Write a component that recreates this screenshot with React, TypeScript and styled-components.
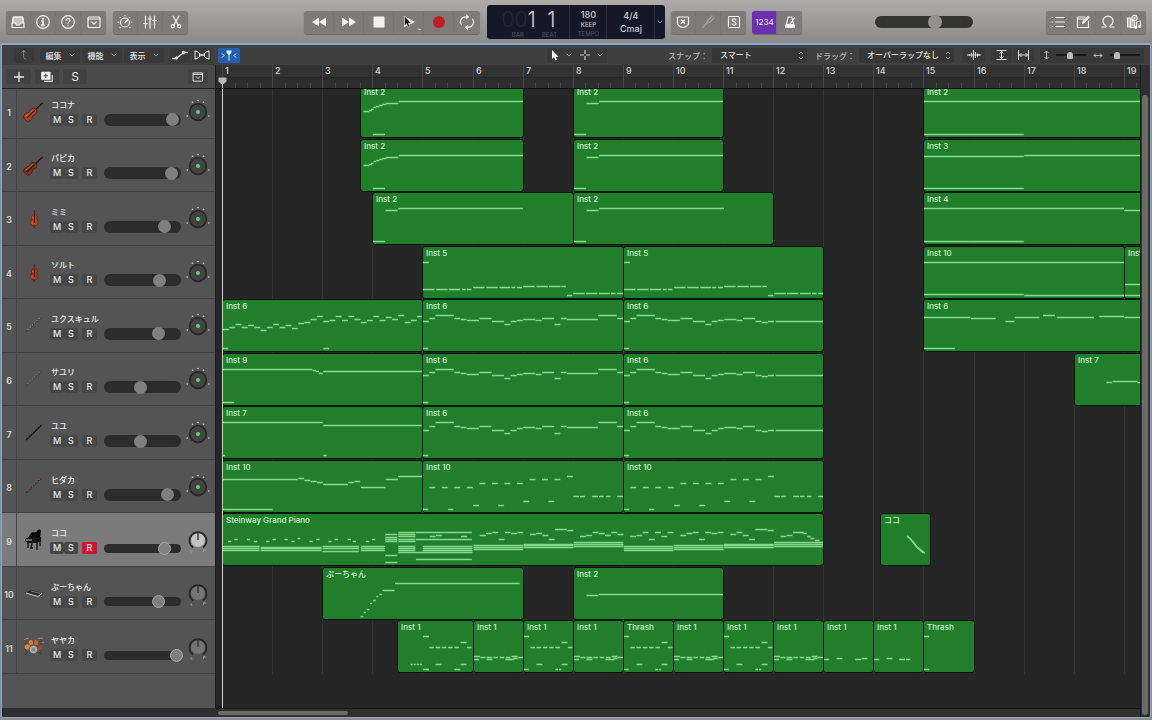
import React from 'react';
import styled, { createGlobalStyle, css } from 'styled-components';

const GlobalStyle = createGlobalStyle`
  *, *::before, *::after { box-sizing: border-box; }
  html, body, #root { height: 100%; }
  body {
    margin: 0;
    background: #8f8d8c;
    font-family: Inter, "Noto Sans CJK JP", sans-serif;
    color: #e4e4e4;
    overflow: hidden;
  }
  button, select { font: inherit; color: inherit; border: 0; padding: 0; margin: 0; background: none; }
  svg { display: block; }
`;

/* ---------- timeline data ---------- */

const BAR = 50.1;
const EIGHTH = BAR / 8;
const barX = (bar: number) => Math.round((bar - 1) * BAR);

/* start and length in eighth notes, then height inside the region */
type Note = [number, number, number];
type RegionData = { name: string; from: number; to: number; notes: Note[]; curve?: string };

const run = (start: number, ys: number[]): Note[] => ys.map((y, i) => [start + i, 1, y]);
const at = (y: number, len: number, ...starts: number[]): Note[] => starts.map((s) => [s, len, y]);
const chord = (start: number, len: number, ...ys: number[]): Note[] => ys.map((y) => [start, len, y]);

const swell: Note[] = [
  [0.4, 0.6, 25], [0.9, 0.5, 25], [1.3, 0.5, 24], [1.6, 0.5, 23], [2, 0.5, 21], [2.4, 0.6, 20],
  [2.9, 0.6, 19], [3.4, 0.7, 18], [4, 2, 17], [6, 20, 15], [1.9, 2, 48],
];
const held: Note[] = [[0, 2, 48], [2, 2, 17], [4, 20, 15]];
const pulse: Note[] = [
  [0, 1, 15],
  [0, 1.9, 42], [2.1, 1.9, 42], [4.1, 1.9, 42], [6.2, 0.7, 42], [7, 0.8, 42],
  [8, 1.9, 40], [10.1, 1.9, 40], [12.2, 1.8, 40], [14.1, 0.7, 40], [15, 0.9, 40],
  [16, 1.9, 39], [18.1, 1.9, 39], [20.1, 1.9, 39], [22.1, 0.8, 39],
  [23, 0.9, 48], [24, 1.9, 46], [26, 1.9, 46], [28.1, 1.8, 46], [30, 0.8, 46], [31, 1, 46],
];
const phrase: Note[] = [
  [0, 0.9, 48], [0, 1, 21], [1, 1, 18], [2, 3, 15], [5, 1, 18], [6, 1, 19], [7, 2, 20], [9, 2, 18],
  [11, 2, 21], [13, 1, 24], [14, 1, 21], [15, 1, 20], [16, 2, 19], [18, 1, 20], [19, 2, 18],
];
const phraseOpen: Note[] = [...phrase, [21, 1, 24], [22, 1, 18], [23, 5, 19], [28, 3, 15], [31, 1, 18]];
const phraseClosed: Note[] = [...phrase, [21, 1, 21], [22, 1, 22], [23, 1, 21], [24.2, 7.8, 21]];
const widen = (notes: Note[]): Note[] =>
  notes.map(([s, l, y]) => [s, l, y > 40 ? y : Math.round(15 + (y - 15) * 1.25)]);
const broken: Note[] = [
  ...at(26, 1, 1, 3, 5, 7), ...at(22, 1, 9, 11, 13, 15), ...at(18, 1, 17, 19, 21), [23, 1, 15],
  ...at(48, 0.9, 0, 4), ...at(44, 1, 8, 12), ...at(40, 1, 16, 20),
  [24, 1, 35], [25.1, 0.8, 35], [27, 1, 35], [28.1, 0.8, 35], [29.2, 0.8, 35], [31, 1, 35],
];
const piano: Note[] = [
  ...at(27, 0.6, 0.8, 4.9, 6.9, 10.9, 13.8, 16.8, 20.7, 22.8),
  ...at(25, 0.6, 1.8, 3.8, 7.9, 9.8, 14.9, 17.8, 19.9, 23.8), [11.9, 0.5, 24],
  ...chord(0, 5.9, 32, 34, 36), ...chord(6, 9.8, 33, 34, 36), ...chord(15.9, 5.9, 32, 34, 37),
  ...chord(22, 3.9, 32, 34, 36),
  ...chord(25.9, 2, 20, 23, 25, 27, 41, 48), ...chord(28, 2.8, 18, 20, 22, 25, 27, 32, 34, 36),
  ...chord(30.8, 9, 18, 25, 45), ...chord(31.9, 8, 32, 34, 36), [28, 11.9, 38],
  [33, 1, 22], [34, 1, 21], [38, 1, 22],
  ...chord(40, 8, 31, 33, 35), ...chord(48, 8, 30, 31, 33), ...chord(56, 8, 28, 30, 32),
  ...run(41, [21, 19, 18, 25, 18, 19, 18]), ...run(49, [20, 19, 21, 25]), [53, 2, 15], [55, 1, 16],
  ...run(57, [22, 21, 18, 19, 21, 18, 20]),
  ...chord(64, 8, 32, 34, 36), ...chord(72, 8, 31, 33, 35), ...chord(80, 8, 30, 31, 33),
  ...chord(88, 8, 28, 30, 32),
  ...run(65, [22, 21, 18, 25, 18, 22, 18]), ...run(73, [21, 19, 18, 25, 18, 19, 18]),
  ...run(81, [20, 18, 21, 25]), [85, 2, 15], [87, 1, 16], [89, 1, 22], [90, 1, 21], [91, 1.8, 18],
  [92.7, 0.6, 19], [93.3, 0.6, 22], [93.8, 0.7, 24], [94.5, 0.8, 26],
];
const drumIntro: Note[] = [
  [4, 1, 15], ...at(26, 0.8, 5, 6, 7, 8, 9, 11), [10, 1, 21], ...at(43, 0.4, 2, 2.5, 3, 3.5),
  [4, 1, 48], [6, 1, 43], [9, 1, 48], [10, 1, 43],
];
const drumFill: Note[] = [
  [0, 0.9, 15], ...at(26, 0.8, 1, 2, 3, 4, 5, 7), [6, 1, 21], [0, 0.8, 48], [2, 1, 43],
  [5, 0.5, 48], [5.6, 0.4, 48], [6, 1, 43],
];
const drumBeat: Note[] = [
  [0, 1, 35], [0, 0.9, 38], [1, 0.9, 36], [2, 1, 36], [2, 1, 38], [3.1, 0.8, 36], [4.1, 0.8, 36],
  [5.1, 0.8, 36], [5, 1.5, 38], [6, 1, 35], [6.3, 0.7, 37], [7, 1, 36],
];

type TrackData = {
  name: string;
  icon: React.ReactNode;
  volume: number;
  stereo?: boolean;
  armed?: boolean;
  regions: RegionData[];
};

const Violin = ({ hue }: { hue: string }) => (
  <svg width="22" height="22" viewBox="0 0 22 22">
    <g transform="translate(7.500 14.500) rotate(46)">
      <path d="M0-17V-3" stroke="#2a1714" strokeWidth="1.500" />
      <path
        d="M-2.600-6.400C-1.200-7.600 1.200-7.600 2.600-6.400 4-5 3.400-3 2.600-2 2.200-.9 2.600 0 3.600 1.400 4.800 4 4 6.600 2 7.200H-2C-4 6.600-4.800 4-3.600 1.400-2.600 0-2.200-.9-2.600-2-3.400-3-4-5-2.600-6.400Z"
        fill={hue}
        stroke="#40160e"
        strokeWidth=".7"
      />
      <path d="M0-6V5" stroke="#2b1512" strokeWidth="1.200" />
      <path d="M-1.600-4.500C-2-2-1.600 2-2.200 4.600" stroke="#f08a5a" strokeWidth=".6" fill="none" />
    </g>
  </svg>
);

const Cello = ({ hue }: { hue: string }) => (
  <svg width="22" height="22" viewBox="0 0 22 22">
    <path d="M11.500 3v7M11 17v4" stroke="#54261a" strokeWidth="1.200" />
    <path
      d="M9 8.500c1.200-1.200 3.800-1.200 5 0 1 1.200.4 2.400-.2 3.200.2 1 .8 1.600 1.200 2.800.4 2-.6 4-2 4.300h-3c-1.600-.3-2.600-2.300-2.200-4.300.4-1.200 1-1.800 1.200-2.800-.6-.8-1-2 0-3.200Z"
      fill={hue}
      stroke="#571f12"
      strokeWidth=".6"
    />
    <path d="M11.400 8v8" stroke="#35150e" strokeWidth="1" />
    <path d="M9.800 9.500v2M9.200 14.500v2.500" stroke="#ee8358" strokeWidth=".7" />
  </svg>
);

const Woodwind = ({ tone, shine }: { tone: string; shine: string }) => (
  <svg width="22" height="22" viewBox="0 0 22 22">
    <path d="M3 18 18.500 3" stroke={tone} strokeWidth="1.500" />
    <path d="M4.500 16 18 2.600" stroke={shine} strokeWidth=".8" strokeDasharray="1.600 1.500" />
  </svg>
);

const GrandPiano = () => (
  <svg width="22" height="22" viewBox="0 0 22 22">
    <path d="M5 9 8 4C9 2 12 5 14 2c1-2 4-2 4 0l-1 7Z" fill="#0b0b0b" />
    <path d="M2 10 6 8h12v4l-4 2H5l-3-2Z" fill="#141414" />
    <path d="M3 11h6" stroke="#bdbdbd" strokeWidth="1" />
    <path d="M5 13v6M14 13v8M17 12v5M9 14l-1 5h2" stroke="#0e0e0e" strokeWidth="1.300" fill="none" />
  </svg>
);

const Keyboard = () => (
  <svg width="22" height="22" viewBox="0 0 22 22">
    <path d="m2 11 6-3 12 3-5 4Z" fill="#2a2a2a" />
    <path d="m3 11 12 3.500 4-3" stroke="#d6d6d6" strokeWidth="1" fill="none" />
    <path d="m8 9 9 2.500" stroke="#8c8c8c" strokeWidth=".8" />
  </svg>
);

const Drums = () => (
  <svg width="22" height="22" viewBox="0 0 22 22">
    <path d="M1 3.500 6 2M15 2.500l5-.5M17 7l4-1" stroke="#a58a5c" strokeWidth="1" />
    <path d="M3 4v13M18 3v14M2 19l3-3M19 19l-3-3" stroke="#3a3a3a" strokeWidth=".9" />
    <rect x="6" y="4" width="4" height="5" rx="1.500" fill="#d9783c" />
    <rect x="11" y="4" width="4" height="5" rx="1.500" fill="#c86429" />
    <circle cx="4.500" cy="11" r="2.700" fill="#e0803f" />
    <rect x="15" y="9" width="4" height="5" rx="1.500" fill="#9c4c22" />
    <circle cx="10.500" cy="13.500" r="4.300" fill="#a9a9a9" stroke="#4d4d4d" strokeWidth=".8" />
    <circle cx="10.500" cy="13.500" r="1.600" fill="#7c8288" />
  </svg>
);

const tracks: TrackData[] = [
  {
    name: 'ココナ', icon: <Violin hue="#b5401f" />, volume: 94,
    regions: [
      { name: 'Inst 2', from: 3.75, to: 7, notes: swell },
      { name: 'Inst 2', from: 8, to: 11, notes: held },
      { name: 'Inst 2', from: 15, to: 20, notes: [[0, 40, 15], [0, 16, 48]] },
    ],
  },
  {
    name: 'パピカ', icon: <Violin hue="#7a3420" />, volume: 92,
    regions: [
      { name: 'Inst 2', from: 3.75, to: 7, notes: swell },
      { name: 'Inst 2', from: 8, to: 11, notes: held },
      { name: 'Inst 3', from: 15, to: 20, notes: [[0, 16, 16], [16, 24, 15], [0, 16, 48]] },
    ],
  },
  {
    name: 'ミミ', icon: <Cello hue="#b8431f" />, volume: 82,
    regions: [
      { name: 'Inst 2', from: 4, to: 8, notes: held },
      { name: 'Inst 2', from: 8, to: 12, notes: held },
      { name: 'Inst 4', from: 15, to: 20, notes: [[0, 32, 15], [32, 8, 17], [0, 16, 48]] },
    ],
  },
  {
    name: 'ソルト', icon: <Cello hue="#a33a1f" />, volume: 74,
    regions: [
      { name: 'Inst 5', from: 5, to: 9, notes: pulse },
      { name: 'Inst 5', from: 9, to: 13, notes: pulse },
      { name: 'Inst 10', from: 15, to: 19, notes: [[0, 32, 15], [0, 16, 47], [16, 16, 48]] },
      { name: 'Inst 10', from: 19, to: 23, notes: [[0, 8, 37], [0, 8, 48]] },
    ],
  },
  {
    name: 'ユクスキュル', icon: <Woodwind tone="#444444" shine="#b4b4b4" />, volume: 73,
    regions: [
      {
        name: 'Inst 6', from: 1, to: 5,
        notes: [
          ...run(0, [29, 27, 24, 27, 25, 27, 30, 27, 24, 27, 25, 28, 23, 22, 19, 16]),
          ...run(16, [21, 20, 16, 20, 16, 19, 22, 20, 16, 20, 17, 19, 15, 22, 20, 16]),
          [0, 0.9, 48], [16, 1, 48],
        ],
      },
      { name: 'Inst 6', from: 5, to: 9, notes: phraseOpen },
      { name: 'Inst 6', from: 9, to: 13, notes: phraseClosed },
      {
        name: 'Inst 6', from: 15, to: 20,
        notes: [[0, 7.5, 17], [7.5, 4, 18], [13, 1.5, 21], [14.5, 4, 17], [19, 2, 15], [21.2, 6, 17], [28, 4, 16], [32, 8, 17], [0, 5, 48]],
      },
    ],
  },
  {
    name: 'サユリ', icon: <Woodwind tone="#4a4a4a" shine="#8d8d8d" />, volume: 46,
    regions: [
      {
        name: 'Inst 9', from: 1, to: 5,
        notes: [[0, 14.3, 15], [14.3, 0.6, 16], [14.8, 0.6, 17], [15.3, 0.7, 19], [16, 16, 17], [0, 1.8, 48]],
      },
      { name: 'Inst 6', from: 5, to: 9, notes: phraseOpen },
      { name: 'Inst 6', from: 9, to: 13, notes: phraseClosed },
      { name: 'Inst 7', from: 18, to: 22, notes: [[5, 1, 28], [6, 4, 27], [10, 4, 28]] },
    ],
  },
  {
    name: 'ユユ', icon: <Woodwind tone="#0c0c0c" shine="#5a5a5a" />, volume: 46,
    regions: [
      { name: 'Inst 7', from: 1, to: 5, notes: [[0, 16, 15], [16, 16, 18], [0, 0.4, 48], [16, 0.6, 48]] },
      { name: 'Inst 6', from: 5, to: 9, notes: widen(phraseOpen) },
      { name: 'Inst 6', from: 9, to: 13, notes: widen(phraseClosed) },
    ],
  },
  {
    name: 'ヒダカ', icon: <Woodwind tone="#4c2c2c" shine="#9a7f7f" />, volume: 87,
    regions: [
      {
        name: 'Inst 10', from: 1, to: 5,
        notes: [
          [0, 12, 18], [12, 1, 17], [13, 1, 19], [14, 1, 20], [15, 1, 21], [16, 4, 23], [20, 1, 21],
          [21, 1, 20], [22, 4, 26], [26, 2, 18], [28, 4, 15], [0, 8, 48],
        ],
      },
      { name: 'Inst 10', from: 5, to: 9, notes: broken },
      { name: 'Inst 10', from: 9, to: 13, notes: broken },
    ],
  },
  {
    name: 'ココ', icon: <GrandPiano />, volume: 82, stereo: true, armed: true,
    regions: [
      { name: 'Steinway Grand Piano', from: 1, to: 13, notes: piano },
      { name: 'ココ', from: 14.125, to: 15.125, notes: [], curve: 'M26 22c5 3 7 8 10 11s5 5 8 6' },
    ],
  },
  {
    name: 'ぷーちゃん', icon: <Keyboard />, volume: 73, stereo: true,
    regions: [
      {
        name: 'ぷーちゃん', from: 3, to: 7,
        notes: [
          [6, 0.5, 48], [6.5, 0.4, 44], [7, 0.5, 41], [7.5, 0.4, 35], [8, 0.5, 32], [8.5, 0.4, 28],
          [9, 0.5, 26], [9.5, 2, 22], [11.5, 20, 15],
        ],
      },
      { name: 'Inst 2', from: 8, to: 11, notes: [[2, 2, 27], [4, 20, 26]] },
    ],
  },
  {
    name: 'ヤヤカ', icon: <Drums />, volume: 100, stereo: true,
    regions: [
      { name: 'Inst 1', from: 4.5, to: 6, notes: drumIntro },
      { name: 'Inst 1', from: 6, to: 7, notes: drumBeat },
      { name: 'Inst 1', from: 7, to: 8, notes: drumFill },
      { name: 'Inst 1', from: 8, to: 9, notes: drumBeat },
      { name: 'Thrash', from: 9, to: 10, notes: drumFill },
      { name: 'Inst 1', from: 10, to: 11, notes: drumBeat },
      { name: 'Inst 1', from: 11, to: 12, notes: drumFill },
      { name: 'Inst 1', from: 12, to: 13, notes: drumBeat },
      { name: 'Inst 1', from: 13, to: 14, notes: [[0, 0.9, 38], [2, 1, 37], [5, 1, 38], [6, 1, 37]] },
      { name: 'Inst 1', from: 14, to: 15, notes: [[0, 0.9, 38], [2, 1, 37], [4, 1, 38], [5.1, 0.8, 38]] },
      { name: 'Thrash', from: 15, to: 16, notes: [[0, 0.9, 15], [0, 0.9, 48]] },
    ],
  },
];

/* ---------- frame ---------- */

const Shell = styled.div`
  display: flex;
  flex-direction: column;
  height: 100%;
`;

const ControlBar = styled.header`
  display: flex;
  align-items: center;
  height: 43px;
  flex: none;
  padding: 1px 6px 0;
  background: linear-gradient(#aeacab, #8c8a89);
`;

const Spacer = styled.div<{ $grow: number }>`
  flex: ${(p) => p.$grow} 1 0;
`;

const Cluster = styled.div<{ $gap: number }>`
  display: flex;
  align-items: center;
  gap: ${(p) => p.$gap}px;
`;

const ButtonGroup = styled.div`
  display: flex;
  height: 23px;
  border-radius: 3px;
  overflow: hidden;
  background: #7d7c7b;
  box-shadow: 0 1px 1px #6a6968;
`;

const BarButton = styled.button<{ $wide?: boolean; $purple?: boolean }>`
  width: ${(p) => (p.$wide ? 30 : 25)}px;
  display: flex;
  align-items: center;
  justify-content: center;
  color: #f1f1f1;
  font-size: 8px;
  font-weight: 500;
  border-right: 1px solid #777675;
  &:last-child {
    border-right: 0;
    width: ${(p) => (p.$wide ? 26 : 25)}px;
  }
  ${(p) => p.$purple && css`background: #6b2fb0; color: #e9d9ff;`}
`;

const Lcd = styled.section`
  display: flex;
  height: 34px;
  width: 178px;
  border-radius: 3px;
  background: #161827;
  color: #cdd0dc;
`;

const LcdCell = styled.div<{ $width: number; $top?: number; $gap?: number }>`
  display: flex;
  flex-direction: column;
  align-items: center;
  justify-content: ${(p) => (p.$top === undefined ? 'center' : 'flex-start')};
  gap: ${(p) => p.$gap ?? 0}px;
  width: ${(p) => p.$width}px;
  padding-top: ${(p) => p.$top ?? 0}px;
  border-right: 1px solid #2a2c3a;
  font-size: 9px;
  line-height: 10px;
  font-weight: 500;
  &:last-child { border-right: 0; }
`;

const Position = styled.div`
  display: grid;
  grid-template-columns: 34px 10px;
  column-gap: 10px;
  text-align: right;
  font-size: 21px;
  line-height: 22px;
  font-weight: 300;
`;

const Ghost = styled.span`
  color: #262838;
`;

const Caption = styled.small<{ $bright?: boolean }>`
  font-size: 6px;
  line-height: 8px;
  font-weight: 500;
  color: ${(p) => (p.$bright ? '#c3c6d2' : '#4b4d5b')};
`;

const Captions = styled.div`
  display: flex;
  gap: 18px;
  padding-left: 12px;
`;

const MasterVolume = styled.input`
  appearance: none;
  width: 98px;
  height: 12px;
  margin: 0;
  border-radius: 6px;
  background: #343432;
  &::-webkit-slider-thumb {
    appearance: none;
    width: 14px;
    height: 14px;
    border-radius: 50%;
    background: #939291;
  }
`;

const Window = styled.main`
  display: flex;
  flex-direction: column;
  flex: 1;
  min-height: 0;
  margin: 0 1px 2px;
  border: 1px solid #86a8dc;
  border-top-width: 2px;
  border-radius: 3px;
  background: #262626;
  overflow: hidden;
`;

const MenuBar = styled.nav`
  display: flex;
  align-items: center;
  height: 20px;
  flex: none;
  padding: 0 6px 0 12px;
  background: #404040;
  font-size: 8px;
  font-weight: 500;
`;

const MenuButton = styled.button<{ $width: number; $active?: boolean }>`
  display: flex;
  align-items: center;
  justify-content: center;
  gap: 7px;
  width: ${(p) => p.$width}px;
  height: 15px;
  border-radius: 2px;
  background: ${(p) => (p.$active ? '#245fae' : '#393939')};
  color: #e2e2e2;
`;

const SelectField = styled.label<{ $width: number }>`
  display: flex;
  align-items: center;
  gap: 4px;
  position: relative;
  color: #bdbdbd;
  white-space: nowrap;
  select {
    appearance: none;
    width: ${(p) => p.$width}px;
    height: 15px;
    padding-left: 8px;
    border-radius: 2px;
    background: #363636;
    color: #e2e2e2;
  }
  svg { position: absolute; right: 3px; top: 3px; pointer-events: none; }
`;

const ZoomGroup = styled.div`
  display: flex;
  align-items: center;
  justify-content: space-around;
  width: 104px;
  height: 15px;
  background: #383838;
`;

const ZoomSlider = styled.input`
  appearance: none;
  width: 30px;
  height: 2px;
  margin: 0;
  background: #161616;
  &::-webkit-slider-thumb {
    appearance: none;
    width: 6px;
    height: 7px;
    border-radius: 3px 3px 1px 1px;
    background: #b9b9b9;
  }
`;

/* ---------- workspace ---------- */

const Workspace = styled.div`
  display: grid;
  grid-template-columns: 214px minmax(0, 1fr) 10px;
  grid-template-rows: 24px minmax(0, 1fr) 9px;
  flex: 1;
  min-height: 0;
`;

const PanelHead = styled.div`
  display: flex;
  align-items: center;
  gap: 4px;
  padding: 0 7px 0 4px;
  background: #4a4a4a;
  border-right: 1px solid #1b1b1b;
  border-bottom: 1px solid #1d1d1d;
`;

const HeadButton = styled.button<{ $width: number }>`
  display: flex;
  align-items: center;
  justify-content: center;
  width: ${(p) => p.$width}px;
  height: 15px;
  border-radius: 2px;
  background: #424242;
  color: #eeeeee;
  font-size: 12px;
  line-height: 15px;
`;

const Clip = styled.div`
  overflow: hidden;
  background: #545454;
  border-right: 1px solid #1b1b1b;
`;

const rows = css`
  display: grid;
  grid-template-rows: repeat(${tracks.length}, minmax(0, 1fr));
  height: 589px;
  margin: -4px 0 0;
  padding: 0;
  list-style: none;
`;

const TrackList = styled.ol`
  ${rows}
`;

const TrackRow = styled.li<{ $selected?: boolean }>`
  display: flex;
  align-items: center;
  background: ${(p) => (p.$selected ? '#7b7b7b' : '#545454')};
  border-bottom: 1px solid #414141;
`;

const TrackNumber = styled.span`
  display: flex;
  align-items: center;
  justify-content: center;
  align-self: stretch;
  width: 15px;
  border-right: 1px solid #444444;
  padding-top: 3px;
  font-size: 9px;
  font-weight: 500;
`;

const IconCell = styled.span`
  display: flex;
  justify-content: center;
  width: 33px;
`;

const TrackMain = styled.div`
  display: flex;
  flex-direction: column;
  gap: 3px;
  width: 131px;
  padding-top: 3px;
`;

const TrackName = styled.strong`
  padding-left: 1px;
  font-size: 8px;
  line-height: 11px;
  font-weight: 500;
  color: #ececec;
`;

const TrackControls = styled.div`
  display: flex;
  align-items: center;
`;

const Toggle = styled.button<{ $armed?: boolean; $apart?: boolean }>`
  width: ${(p) => (p.$apart ? 15 : 14)}px;
  height: 12px;
  margin-left: ${(p) => (p.$apart ? 4 : 0)}px;
  border-radius: 2px;
  background: ${(p) => (p.$armed ? '#cf1230' : '#474747')};
  color: #e8e8e8;
  font-size: 9px;
  line-height: 12px;
  font-weight: 500;
  text-align: center;
`;

const Fader = styled.span<{ $slim?: boolean }>`
  display: flex;
  align-items: center;
  width: 77px;
  height: ${(p) => (p.$slim ? 9 : 12)}px;
  margin-left: 7px;
  border-radius: 6px;
  background: #2c2c2c;
  input {
    appearance: none;
    flex: none;
    width: 79px;
    height: 13px;
    margin: 0;
    background: none;
  }
  input::-webkit-slider-thumb {
    appearance: none;
    width: 13px;
    height: 13px;
    border-radius: 50%;
    background: #808080;
    border: ${(p) => (p.$slim ? '1px solid #a6a6a6' : '0')};
  }
`;

const KnobCell = styled.span`
  display: flex;
  justify-content: center;
  width: 34px;
  padding-top: 2px;
`;

const Ruler = styled.div`
  position: relative;
  overflow: hidden;
  border-bottom: 1px solid #0d0d0d;
  background: linear-gradient(#323232 0 12px, #262626 12px 13px, #2d2d2d 13px);
`;

const BarMark = styled.span`
  position: absolute;
  top: 0;
  bottom: 0;
  padding-left: 2px;
  border-left: 1px solid #484848;
  font-size: 9px;
  line-height: 11px;
  font-weight: 500;
  color: #d2d2d2;
`;

const Ticks = styled.svg`
  position: absolute;
  left: 0;
  bottom: 0;
`;

const PlayheadCap = styled.svg`
  position: absolute;
  left: 2px;
  bottom: 0;
`;

const Canvas = styled.div`
  position: relative;
  overflow: hidden;
  background: #262626;
`;

const GridLines = styled.svg`
  position: absolute;
  top: 0;
  left: 0;
`;

const Lanes = styled.div`
  ${rows}
`;

const Lane = styled.div`
  position: relative;
`;

const RegionBox = styled.article`
  position: absolute;
  top: 0;
  height: 53px;
  border: 1px solid #06160a;
  border-radius: 3px;
  background: #217f2c;
  overflow: hidden;
  svg { position: absolute; top: 0; left: 0; }
`;

const RegionName = styled.span`
  position: relative;
  display: block;
  padding-left: 3px;
  font-size: 8px;
  line-height: 13px;
  font-weight: 500;
  color: #c9f3c9;
  white-space: nowrap;
`;

const Playhead = styled.div`
  position: absolute;
  top: 0;
  bottom: 0;
  left: 6px;
  width: 1px;
  background: #cfcfcf;
`;

const ScrollTrackY = styled.div`
  grid-row: span 2;
  padding: 6px 2px 2px 1px;
  background: #2f2f2f;
  border-left: 1px solid #1c1c1c;
`;

const ScrollThumb = styled.div<{ $width?: number }>`
  width: ${(p) => (p.$width ? `${p.$width}px` : '100%')};
  height: 100%;
  border-radius: 3px;
  background: #6c6b68;
`;

const ScrollTrackX = styled.div`
  padding: 2px;
  border-top: 1px solid #161616;
  background: #30302d;
`;

const Corner = styled.div`
  background: #2f2f2f;
  border-left: 1px solid #1c1c1c;
`;

/* ---------- drawings ---------- */

type IconProps = { size?: number; children: React.ReactNode; stroke?: number };
const Icon = ({ size = 16, children, stroke = 1.2 }: IconProps) => (
  <svg
    width={size}
    height={size}
    viewBox="0 0 16 16"
    fill="none"
    stroke="currentColor"
    strokeWidth={stroke}
    strokeLinecap="round"
    strokeLinejoin="round"
  >
    {children}
  </svg>
);

const Chevron = () => (
  <svg width="6" height="4" viewBox="0 0 6 4" fill="none" stroke="#a9a9a9">
    <path d="m.7.6 2.300 2.300L5.300.6" />
  </svg>
);

const UpDown = () => (
  <svg width="6" height="9" viewBox="0 0 6 9" fill="none" stroke="#9c9c9c">
    <path d="m1 3 2-2 2 2M1 6l2 2 2-2" />
  </svg>
);

const PanKnob = ({ stereo, bright }: { stereo?: boolean; bright?: boolean }) =>
  stereo ? (
    <svg width="24" height="26" viewBox="0 0 24 26">
      <circle cx="12" cy="12" r="7" fill={bright ? '#c4c4c4' : '#757575'} />
      <path d="M7 19.500A8.500 8.500 0 1 1 17 19.500" fill="none" stroke="#272727" strokeWidth="1.700" />
      <path d="M12 4v8" stroke="#2b2b2b" strokeWidth="1.300" />
      <path d="M5 22v2h1.500M17.500 24v-2.500h1.500v1.500" fill="none" stroke="#a2a2a2" strokeWidth=".8" />
    </svg>
  ) : (
    <svg width="24" height="26" viewBox="0 0 24 26">
      <circle cx="12" cy="13" r="8.300" fill="#434343" stroke="#272727" strokeWidth="1.700" />
      <circle cx="12" cy="13" r="2" fill="#4ee06a" />
      <g fill="#d0d0d0">
        <circle cx="12" cy="1.500" r=".8" />
        <circle cx="6.500" cy="3.200" r=".8" />
        <circle cx="17.500" cy="3.200" r=".8" />
        <circle cx="1.200" cy="17" r=".8" />
        <circle cx="22.800" cy="17" r=".8" />
      </g>
    </svg>
  );

const Region = ({ data }: { data: RegionData }) => {
  const left = barX(data.from);
  const width = barX(data.to) - left;
  const d = data.notes
    .map(([s, len, y]) => `M${(s * EIGHTH).toFixed(1)} ${y + 0.5}h${(len * EIGHTH - 0.4).toFixed(1)}`)
    .join('');
  return (
    <RegionBox style={{ left: left + 6, width: width + 1 }}>
      <svg width={width} height="52" fill="none" stroke="#86d98b">
        <path d={d} strokeWidth="1.400" />
        {data.curve && <path d={data.curve} strokeWidth="1.800" />}
      </svg>
      <RegionName>{data.name}</RegionName>
    </RegionBox>
  );
};

const BARS = Array.from({ length: 19 }, (_, i) => i + 1);
const tickPath = BARS.map((b) =>
  [1, 2, 3].map((q) => `M${Math.round((b - 1 + q / 4) * BAR) + 6.5} 1v5`).join(''),
).join('');

export default function App() {
  return (
    <Shell>
      <GlobalStyle />
      <ControlBar>
        <Cluster $gap={7}>
          <ButtonGroup>
            <BarButton aria-label="Library">
              <Icon><path d="M3.500 3h9l1.500 7v3.500H2V10Z" /><path d="M3.500 3h9l1 6h-3l-1 2h-3l-1-2h-3Z" fill="currentColor" fillOpacity=".6" /></Icon>
            </BarButton>
            <BarButton aria-label="Inspector">
              <Icon><circle cx="8" cy="8" r="6.300" /><path d="M8 4.500v.4M6.800 7H8v4M6.500 11.300h3" strokeWidth="1.700" /></Icon>
            </BarButton>
            <BarButton aria-label="Quick help">
              <Icon><circle cx="8" cy="8" r="6.300" /><path d="M6.100 6.400c0-2.500 3.800-2.500 3.800 0 0 1.500-1.900 1.500-1.900 2.900M8 11.500v.2" /></Icon>
            </BarButton>
            <BarButton aria-label="Toolbar">
              <Icon><rect x="2" y="3" width="12" height="10.500" rx="1" /><path d="M2 5h12M5.800 8 8 10.200 10.200 8" /></Icon>
            </BarButton>
          </ButtonGroup>
          <ButtonGroup>
            <BarButton aria-label="Smart controls">
              <Icon><circle cx="8" cy="8.500" r="4.500" /><path d="m8 8.500 3-3M8 1.500v.2M3.200 3.400l.2.200M12.800 3.400l-.2.200M1.200 8.200h.2M14.800 8.200h-.2M3 13.500l.2-.2M13 13.500l-.2-.2" /></Icon>
            </BarButton>
            <BarButton aria-label="Mixer">
              <Icon><path d="M3.500 2v12M8 2v12M12.500 2v12M1.800 9.500h3.400M6.300 5h3.400M10.800 6.500h3.400" /></Icon>
            </BarButton>
            <BarButton aria-label="Editors">
              <Icon><path d="m5 2 5.300 9.200M11 2 5.700 11.200" /><circle cx="4.800" cy="12.300" r="1.600" /><circle cx="11.200" cy="12.300" r="1.600" /></Icon>
            </BarButton>
          </ButtonGroup>
        </Cluster>
        <Spacer $grow={8} />
        <Cluster $gap={7}>
          <ButtonGroup>
            <BarButton $wide aria-label="Rewind">
              <Icon stroke={0}><path d="M8 3.500v9L1 8ZM15 3.500v9L8 8Z" fill="currentColor" /></Icon>
            </BarButton>
            <BarButton $wide aria-label="Forward">
              <Icon stroke={0}><path d="M1 3.500v9L8 8ZM8 3.500v9L15 8Z" fill="currentColor" /></Icon>
            </BarButton>
            <BarButton $wide aria-label="Stop">
              <Icon stroke={0}><rect x="2.500" y="2.500" width="11" height="11" fill="currentColor" /></Icon>
            </BarButton>
            <BarButton $wide aria-label="Play">
              <svg width="24" height="20" viewBox="0 0 24 20">
                <path d="m7 4 11 6-11 5Z" fill="#f4f4f4" />
                <path d="M7.500 4v9.500l2.200-1.700 1.500 3.200 1.500-.7-1.400-3H14Z" fill="#0c0c0c" stroke="#eee" strokeWidth=".5" />
                <path d="m21 16.500 1.500 1.500 1.500-1.500" stroke="#ddd" fill="none" />
              </svg>
            </BarButton>
            <BarButton $wide aria-label="Record">
              <Icon stroke={0}><circle cx="8" cy="8" r="6" fill="#c01c22" /></Icon>
            </BarButton>
            <BarButton $wide aria-label="Cycle">
              <Icon><path d="M9 2.800H6.500a5 5 0 0 0-4 8M7 13.200h2.500a5 5 0 0 0 4-8M7.300 1l2 1.800-2 1.800M8.700 11.400l-2 1.800 2 1.800" /></Icon>
            </BarButton>
          </ButtonGroup>
          <Cluster $gap={6}>
            <Lcd>
              <LcdCell $width={83} $top={4}>
                <Position>
                  <span><Ghost>00</Ghost>1</span>
                  <span>1</span>
                </Position>
                <Captions><Caption>BAR</Caption><Caption>BEAT</Caption></Captions>
              </LcdCell>
              <LcdCell $width={37} $top={5} $gap={1}>
                <span>180</span>
                <Caption $bright>KEEP</Caption>
                <Caption>TEMPO</Caption>
              </LcdCell>
              <LcdCell $width={48} $top={6} $gap={3}>
                <span>4/4</span>
                <span>Cmaj</span>
              </LcdCell>
              <LcdCell $width={10}><Chevron /></LcdCell>
            </Lcd>
            <ButtonGroup>
              <BarButton aria-label="Replace">
                <Icon><path d="M2.500 3h11v6c0 2-2.500 4-5.500 4.500C5 13 2.500 11 2.500 9Z" /><path d="m6.300 6 3.400 3.400M9.700 6 6.300 9.400" /></Icon>
              </BarButton>
              <BarButton aria-label="Tuner">
                <Icon><g stroke="#a5a4a3"><path d="M2.500 13.500 7 9M7 9c-1-2 3-4 5-7M7 9c2 1 4-2 7-5" /></g></Icon>
              </BarButton>
              <BarButton aria-label="Solo">
                <Icon><rect x="2.500" y="2.500" width="11" height="11" rx="1" /><path d="M10 6c-.5-1.500-3.800-1.500-3.800.3C6.200 8.200 10 7.600 10 9.700c0 1.900-3.600 1.900-4 .2" /></Icon>
              </BarButton>
            </ButtonGroup>
            <ButtonGroup>
              <BarButton $purple>1234</BarButton>
              <BarButton aria-label="Metronome">
                <Icon><path d="M6.300 3h3.400L12.500 13.500h-9ZM4.500 10.500h7M8 10l4.500-6" /><path d="M4.200 10.800h7.600l.7 2.700h-9Z" fill="currentColor" /></Icon>
              </BarButton>
            </ButtonGroup>
          </Cluster>
        </Cluster>
        <Spacer $grow={5} />
        <MasterVolume type="range" aria-label="Master volume" defaultValue={63} />
        <Spacer $grow={5} />
        <ButtonGroup>
          <BarButton aria-label="List editors">
            <Icon><path d="M5.500 3.500h9M5.500 8h9M5.500 12.500h9M2 3.500h.6M2 8h.6M2 12.500h.6" /></Icon>
          </BarButton>
          <BarButton aria-label="Note pad">
            <Icon><path d="M10 3H2.500v10.500h11V7M2.500 5H9M7.500 9.500l1-2.500L13 2.500l1 1L9.500 8Z" /></Icon>
          </BarButton>
          <BarButton aria-label="Loops">
            <Icon><path d="M2 13h3.500c.8 0 .8-1 .3-1.400a5 5 0 1 1 4.400 0c-.5.4-.5 1.400.3 1.400H14" /></Icon>
          </BarButton>
          <BarButton aria-label="Browsers">
            <Icon><path d="M1.500 4v9h3V4ZM4.500 6h4v7.500h-4" fill="currentColor" fillOpacity=".5" /><circle cx="8.500" cy="4" r="2.600" /><circle cx="8.500" cy="4" r=".6" /><path d="M10.500 13.500V8l4-1v5.500" /><circle cx="9.800" cy="13.300" r="1" fill="currentColor" /><circle cx="13.700" cy="12.500" r="1" fill="currentColor" /></Icon>
          </BarButton>
        </ButtonGroup>
      </ControlBar>

      <Window>
        <MenuBar>
          <Cluster $gap={6}>
            <MenuButton $width={20} aria-label="Up one level">
              <Icon size={12}><path d="M5 4.500 7.500 2 10 4.500M7.500 2v8c0 2 1 3.500 3 3.500" stroke="#8c8c8c" /></Icon>
            </MenuButton>
            <Cluster $gap={2}>
              <MenuButton $width={40} aria-haspopup="menu">編集 <Chevron /></MenuButton>
              <MenuButton $width={40} aria-haspopup="menu">機能 <Chevron /></MenuButton>
              <MenuButton $width={40} aria-haspopup="menu">表示 <Chevron /></MenuButton>
            </Cluster>
            <Cluster $gap={2}>
              <MenuButton $width={20} aria-label="Automation">
                <svg width="16" height="10" viewBox="0 0 16 10" fill="none" stroke="currentColor">
                  <path d="M0 8.500h4l8-6h4" strokeWidth="1.300" />
                  <circle cx="4.500" cy="8" r="1.200" fill="currentColor" /><circle cx="11.500" cy="2.500" r="1.200" fill="currentColor" />
                </svg>
              </MenuButton>
              <MenuButton $width={20} aria-label="Flex">
                <svg width="16" height="10" viewBox="0 0 16 10" fill="none" stroke="currentColor">
                  <path d="M1 .5v9M15 .5v9M1 1c3 0 4 3 7 4 3-1 4-4 7-4M1 9c3 0 4-3 7-4 3 1 4 4 7 4M5.500 3v4M10.500 3v4" />
                </svg>
              </MenuButton>
            </Cluster>
            <MenuButton $width={22} $active aria-label="Catch playhead">
              <svg width="16" height="11" viewBox="0 0 16 11" fill="none" stroke="#e4efff">
                <path d="M1 3.500 3 5.500l-2 2M15 3.500l-2 2 2 2" />
                <path d="M5.500.5h5v2L8.500 5v5.500h-1V5l-2-2.500Z" fill="#e4efff" stroke="none" />
              </svg>
            </MenuButton>
          </Cluster>
          <Spacer $grow={5} />
          <Cluster $gap={0}>
            <MenuButton $width={30} aria-label="Left-click tool">
              <svg width="8" height="11" viewBox="0 0 8 11"><path d="M1 0v9l2-1.800L4.500 10.500l1.500-.7-1.500-3h3Z" fill="#fff" /></svg>
              <Chevron />
            </MenuButton>
            <MenuButton $width={30} aria-label="Command-click tool">
              <svg width="10" height="10" viewBox="0 0 10 10" stroke="#c9c9c9" strokeWidth="1.200"><path d="M5 0v4M5 6v4M0 5h4M6 5h4" /></svg>
              <Chevron />
            </MenuButton>
          </Cluster>
          <Spacer $grow={1} />
          <Cluster $gap={8}>
            <SelectField $width={95}>
              スナップ：
              <select defaultValue="smart"><option value="smart">スマート</option></select>
              <UpDown />
            </SelectField>
            <SelectField $width={95}>
              ドラッグ：
              <select defaultValue="none"><option value="none">オーバーラップなし</option></select>
              <UpDown />
            </SelectField>
            <Cluster $gap={6}>
              <MenuButton $width={23} aria-label="Waveform zoom">
                <svg width="14" height="10" viewBox="0 0 14 10" stroke="#d6d6d6"><path d="M0 5h14M2.500 4v2M4.500 2.500v5M6.500 0v10M8.500 2v6M10.500 3.500v3M12 4v2" /></svg>
              </MenuButton>
              <Cluster $gap={1}>
                <MenuButton $width={21} aria-label="Fit vertically">
                  <svg width="11" height="10" viewBox="0 0 11 10" fill="none" stroke="#dcdcdc"><path d="M.5.5h10M.5 9.500h10M5.500 1.500v7M3.500 3.500l2-2 2 2M3.500 6.500l2 2 2-2" /></svg>
                </MenuButton>
                <MenuButton $width={21} aria-label="Fit horizontally">
                  <svg width="11" height="10" viewBox="0 0 11 10" fill="none" stroke="#dcdcdc"><path d="M.5 0v10M10.500 0v10M1.500 5h8M3.500 3l-2 2 2 2M7.500 3l2 2-2 2" /></svg>
                </MenuButton>
              </Cluster>
              <ZoomGroup>
                <svg width="5" height="10" viewBox="0 0 5 10" fill="none" stroke="#bbb"><path d="M2.500 1v8M.5 3l2-2 2 2M.5 7l2 2 2-2" /></svg>
                <ZoomSlider type="range" aria-label="Vertical zoom" defaultValue={46} />
                <svg width="10" height="5" viewBox="0 0 10 5" fill="none" stroke="#bbb"><path d="M1 2.500h8M3 .5l-2 2 2 2M7 .5l2 2-2 2" /></svg>
                <ZoomSlider type="range" aria-label="Horizontal zoom" defaultValue={16} />
              </ZoomGroup>
            </Cluster>
          </Cluster>
        </MenuBar>

        <Workspace>
          <PanelHead>
            <HeadButton $width={25} aria-label="Add track"><Icon size={12} stroke={1.8}><path d="M8 2v12M2 8h12" /></Icon></HeadButton>
            <HeadButton $width={24} aria-label="Duplicate track">
              <Icon size={14}><rect x="2" y="2.500" width="9.500" height="8" fill="currentColor" /><path d="M5 13h9V6" /><path d="M6.700 4.500v4M4.700 6.500h4" stroke="#444" /></Icon>
            </HeadButton>
            <HeadButton $width={24}>S</HeadButton>
            <Spacer $grow={1} />
            <HeadButton $width={20} aria-label="Header settings">
              <Icon size={12}><rect x="2" y="2.500" width="12" height="11" /><path d="M2 4.500h12M5.500 7.500 8 10l2.500-2.500" /></Icon>
            </HeadButton>
          </PanelHead>

          <Ruler>
            {BARS.map((b) => (
              <BarMark key={b} style={{ left: barX(b) + 6 }}>{b}</BarMark>
            ))}
            <Ticks width="1100" height="6" stroke="#484848"><path d={tickPath} /></Ticks>
            <PlayheadCap width="9" height="11" viewBox="0 0 9 11">
              <path d="M.5.500h8v4L5 7.500V11H4V7.500L.5 4.500Z" fill="#b9b9b9" />
            </PlayheadCap>
          </Ruler>
          <Corner />

          <Clip>
            <TrackList>
              {tracks.map((t, i) => (
                <TrackRow key={t.name} $selected={t.armed}>
                  <TrackNumber>{i + 1}</TrackNumber>
                  <IconCell>{t.icon}</IconCell>
                  <TrackMain>
                    <TrackName>{t.name}</TrackName>
                    <TrackControls>
                      <Toggle>M</Toggle>
                      <Toggle>S</Toggle>
                      <Toggle $apart $armed={t.armed}>R</Toggle>
                      <Fader $slim={t.stereo}>
                        <input type="range" aria-label={`${t.name} volume`} defaultValue={t.volume} />
                      </Fader>
                    </TrackControls>
                  </TrackMain>
                  <KnobCell><PanKnob stereo={t.stereo} bright={t.armed} /></KnobCell>
                </TrackRow>
              ))}
            </TrackList>
          </Clip>

          <Canvas>
            <GridLines width="1100" height="585" stroke="#343434">
              <path d={BARS.map((b) => `M${barX(b) + 6.5} 0v585`).join('')} />
            </GridLines>
            <Lanes>
              {tracks.map((t) => (
                <Lane key={t.name}>
                  {t.regions.map((r) => <Region key={r.from} data={r} />)}
                </Lane>
              ))}
            </Lanes>
            <Playhead />
          </Canvas>
          <ScrollTrackY><ScrollThumb /></ScrollTrackY>

          <Corner />
          <ScrollTrackX><ScrollThumb $width={130} /></ScrollTrackX>
        </Workspace>
      </Window>
    </Shell>
  );
}
